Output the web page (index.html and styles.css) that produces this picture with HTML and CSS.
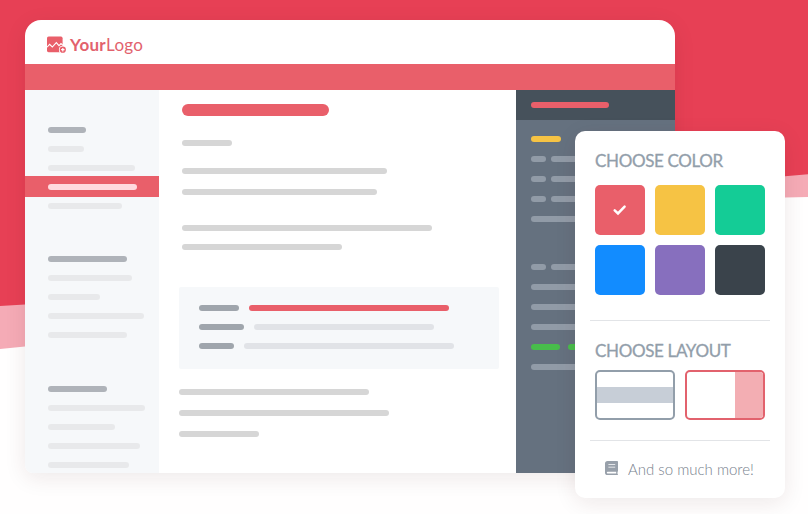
FILE: index.html
```html
<!DOCTYPE html>
<html lang="en">
<head>
<meta charset="utf-8">
<title>YourLogo</title>
<link rel="stylesheet" href="styles.css">
</head>
<body>
<svg class="backdrop" viewBox="0 0 808 514" aria-hidden="true">
  <path fill="#f5abb6" d="M0 0H808V197L785 197.6L25 346.5L0 349Z"/>
  <path fill="#e74055" d="M0 0H808V174.3L785 176.3L25 304.5L0 306Z"/>
</svg>

<div class="window">
  <header class="topbar">
    <svg class="logo-mark" viewBox="0 0 20 18" aria-hidden="true">
      <rect x="0" y="0.6" width="15.6" height="15.6" rx="1.6" fill="#e95f6a"/>
      <path d="M0 11.2L2.6 8.3L5.3 11L9.3 6.6L12 9.7L14 7.6L16 9.3" fill="none" stroke="#fff" stroke-width="1.1"/>
      <circle cx="15.8" cy="13.7" r="3.9" fill="#fff"/>
      <circle cx="15.8" cy="13.7" r="3.1" fill="#e95f6a"/>
      <path d="M15.8 12v3.4M14.1 13.7h3.4" stroke="#fff" stroke-width="1.2"/>
    </svg>
    <span class="logo-text"><b>Your</b>Logo</span>
  </header>
  <div class="ribbon"></div>
  <div class="columns">
    <nav class="sidebar">
      <div class="group">
        <i class="bar strong" style="width:38px"></i>
        <i class="bar" style="width:36px"></i>
        <i class="bar" style="width:87px"></i>
        <div class="active"><i class="bar" style="width:89px"></i></div>
        <i class="bar" style="width:74px"></i>
      </div>
      <div class="group">
        <i class="bar strong" style="width:79px"></i>
        <i class="bar" style="width:84px"></i>
        <i class="bar" style="width:52px"></i>
        <i class="bar" style="width:96px"></i>
        <i class="bar" style="width:79px"></i>
      </div>
      <div class="group last">
        <i class="bar strong" style="width:59px"></i>
        <i class="bar" style="width:97px"></i>
        <i class="bar" style="width:67px"></i>
        <i class="bar" style="width:92px"></i>
        <i class="bar" style="width:81px"></i>
      </div>
    </nav>

    <main class="content">
      <div class="article">
        <i class="heading"></i>
        <i class="bar lead" style="width:50px"></i>
        <div class="para wide">
          <i class="bar" style="width:205px"></i>
          <i class="bar" style="width:195px"></i>
        </div>
        <div class="para">
          <i class="bar" style="width:250px"></i>
          <i class="bar" style="width:160px"></i>
        </div>
      </div>
      <div class="callout">
        <div class="pair"><i class="bar key" style="width:40px"></i><i class="bar accent" style="width:200px"></i></div>
        <div class="pair"><i class="bar key" style="width:45px"></i><i class="bar" style="width:180px"></i></div>
        <div class="pair"><i class="bar key" style="width:35px"></i><i class="bar" style="width:210px"></i></div>
      </div>
      <div class="footer-lines">
        <i class="bar" style="width:190px"></i>
        <i class="bar" style="width:210px"></i>
        <i class="bar" style="width:80px"></i>
      </div>
    </main>

    <aside class="code">
      <div class="code-head"><i class="bar accent" style="width:78px"></i></div>
      <div class="code-block">
        <i class="bar yellow" style="width:30px"></i>
        <div class="split"><i class="bar"></i><i class="bar"></i></div>
        <div class="split"><i class="bar"></i><i class="bar"></i></div>
        <div class="split"><i class="bar"></i><i class="bar"></i></div>
        <i class="bar" style="width:90px"></i>
      </div>
      <div class="code-block second">
        <div class="split"><i class="bar"></i><i class="bar"></i></div>
        <i class="bar" style="width:90px"></i>
        <i class="bar" style="width:90px"></i>
        <i class="bar" style="width:90px"></i>
        <div class="split green"><i class="bar"></i><i class="bar"></i></div>
        <i class="bar" style="width:90px"></i>
      </div>
    </aside>
  </div>
</div>

<section class="panel">
  <h2 class="title color-title">CHOOSE COLOR</h2>
  <div class="swatches">
    <div class="swatch red">
      <svg width="16" height="14" viewBox="0 0 16 14" aria-hidden="true"><path d="M2.7 7.3L6 10.4L12.6 3.7" fill="none" stroke="#fff" stroke-width="2.5" stroke-linecap="round"/></svg>
    </div>
    <div class="swatch amber"></div>
    <div class="swatch mint"></div>
    <div class="swatch blue"></div>
    <div class="swatch purple"></div>
    <div class="swatch dark"></div>
  </div>
  <hr class="rule first-rule">
  <h2 class="title layout-title">CHOOSE LAYOUT</h2>
  <div class="layouts">
    <div class="layout rows"><span></span></div>
    <div class="layout cols"><span></span></div>
  </div>
  <hr class="rule">
  <div class="more">
    <svg width="13" height="15" viewBox="0 0 13 15" aria-hidden="true">
      <path fill="#98a0aa" fill-rule="evenodd" d="M2.6 0H12.2Q13 0 13 .8V10Q13 10.6 12.5 10.8V13Q13 13.1 13 13.5Q13 14 12.3 14H2.6Q0 14 0 11.4V2.6Q0 0 2.6 0ZM3.4 3.2V4.1H10.2V3.2ZM3.4 5.7V6.6H10.2V5.7ZM2.7 10.7Q1.8 10.8 1.8 11.6Q1.8 12.4 2.7 12.5H11.2V10.7Z"/>
    </svg>
    <span>And so much more!</span>
  </div>
</section>
</body>
</html>
```

FILE: styles.css
```css
* { box-sizing: border-box; }

body {
  margin: 0;
  height: 514px;
  padding: 20px 0 0 25px;
  position: relative;
  overflow: hidden;
  background: #fffefe;
  font-family: Lato, "Liberation Sans", sans-serif;
}

.backdrop {
  position: absolute;
  inset: 0;
  width: 808px;
  height: 514px;
}

.window {
  position: relative;
  display: flex;
  flex-direction: column;
  width: 650px;
  height: 453px;
  background: #fff;
  border-radius: 16px 16px 8px 8px;
  overflow: hidden;
  box-shadow: 0 5px 22px rgba(70, 20, 20, 0.09);
}

.topbar {
  display: flex;
  align-items: center;
  height: 44px;
  padding: 5px 0 0 22px;
}

.logo-mark { width: 20px; height: 18px; margin-right: 3px; }

.logo-text {
  color: #e2626d;
  font-size: 17px;
  line-height: 20px;
  letter-spacing: 0.3px;
}

.ribbon { height: 26px; background: #e95f6a; }

.columns {
  display: grid;
  grid-template-columns: 134px 357px 159px;
  height: 383px;
}

.bar {
  display: block;
  flex: none;
  height: 6px;
  border-radius: 3px;
  background: #d6d6d6;
}

.accent { background: #e95f6a; }

.sidebar {
  display: flex;
  flex-direction: column;
  gap: 47px;
  padding-top: 37px;
  background: #f6f8fa;
}

.group {
  display: flex;
  flex-direction: column;
  gap: 13px;
  padding-left: 23px;
}
.group .bar { background: #e8e9eb; }
.group .strong { background: #afb3b9; }
.group.last { padding-top: 1px; }

.active {
  margin: -8px 0 -7px -23px;
  padding: 8px 0 7px 23px;
  background: #e95f6a;
}
.active .bar { background: #ffdade; }

.content { padding: 14px 17px 0 20px; }
.article { height: 183px; padding-left: 3px; }

.heading {
  display: block;
  width: 147px;
  height: 12px;
  border-radius: 6px;
  background: #e95f6a;
}

.lead { margin: 24px 0 22px; }

.para { display: flex; flex-direction: column; gap: 13px; }
.para.wide { gap: 15px; margin-bottom: 30px; }

.callout {
  display: flex;
  flex-direction: column;
  gap: 13px;
  height: 82px;
  padding: 18px 20px;
  background: #f6f8fa;
  border-radius: 2px;
}
.callout .bar { background: #e1e3e7; }
.callout .key { background: #9fa5ac; }
.callout .accent { background: #e95f6a; }
.pair { display: flex; gap: 10px; }

.footer-lines {
  display: flex;
  flex-direction: column;
  gap: 15px;
  padding-top: 20px;
}

.code { background: #65717f; }
.code .bar { background: #919ba7; }
.code .accent { background: #e95f6a; }
.code .yellow { background: #f6c344; }
.code-head { height: 30px; padding: 12px 15px; background: #46515b; }

.code-block {
  display: flex;
  flex-direction: column;
  gap: 14px;
  padding: 16px 0 0 15px;
}
.code-block.second { padding-top: 42px; }

.split { display: grid; grid-template-columns: 15px 85px; gap: 5px; }
.split.green { grid-template-columns: 29px 60px; gap: 8px; }
.split.green .bar { background: #48bd4b; }

.panel {
  position: absolute;
  left: 575px;
  top: 131px;
  width: 210px;
  height: 367px;
  padding: 0 15px;
  background: #fff;
  border-radius: 10px;
  box-shadow: 0 5px 22px rgba(70, 20, 20, 0.09);
}

.title {
  margin: 0;
  padding: 20px 0 0 5px;
  color: #929eaa;
  font-size: 17px;
  font-weight: 400;
  line-height: 20px;
  letter-spacing: -0.35px;
  white-space: nowrap;
  -webkit-text-stroke: 0.3px #929eaa;
}
.color-title { margin-bottom: 14px; }
.layout-title { margin-bottom: 9px; }

.swatches {
  display: grid;
  grid-template-columns: repeat(3, 50px);
  gap: 10px;
  padding-left: 5px;
}

.swatch {
  display: flex;
  align-items: center;
  justify-content: center;
  height: 50px;
  border-radius: 5px;
}
.red { background: #e95f6a; }
.amber { background: #f6c344; }
.mint { background: #14cc96; }
.blue { background: #128cff; }
.purple { background: #876fbe; }
.dark { background: #3a434b; }

.rule { height: 1px; margin: 0; border: 0; background: #e2e4e7; }
.first-rule { margin-top: 25px; }

.layouts { display: flex; gap: 10px; padding: 0 5px 20px; }

.layout {
  display: flex;
  width: 80px;
  height: 50px;
  border: 2px solid #929eaa;
  border-radius: 5px;
  overflow: hidden;
}
.rows { align-items: center; }
.rows span { width: 100%; height: 16px; background: #c7ced7; }
.cols { justify-content: flex-end; border-color: #e2626d; }
.cols span { width: 28px; background: #f3aeb3; }

.more {
  display: flex;
  align-items: flex-start;
  gap: 10px;
  padding: 20px 0 0 15px;
  color: #77818d;
  font-size: 15px;
  font-weight: 300;
  line-height: 16px;
  letter-spacing: 0;
  white-space: nowrap;
}
```
